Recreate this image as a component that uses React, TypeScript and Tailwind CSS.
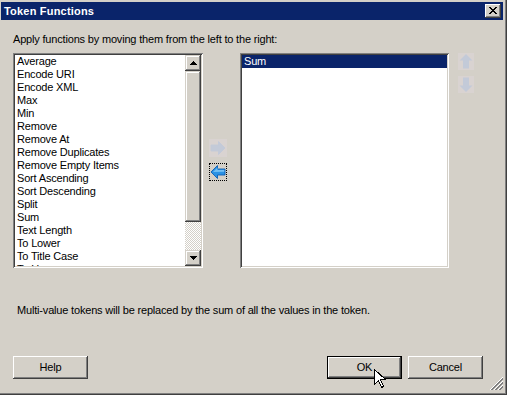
import React from "react";

const items = [
  "Average",
  "Encode URI",
  "Encode XML",
  "Max",
  "Min",
  "Remove",
  "Remove At",
  "Remove Duplicates",
  "Remove Empty Items",
  "Sort Ascending",
  "Sort Descending",
  "Split",
  "Sum",
  "Text Length",
  "To Lower",
  "To Title Case",
  "To Upper",
];

const raisedBtn =
  "shadow-[inset_-1px_-1px_#404040,inset_1px_1px_#ffffff,inset_-2px_-2px_#808080,inset_2px_2px_#d4d0c8]";
const raisedScroll =
  "shadow-[inset_-1px_-1px_#404040,inset_1px_1px_#d4d0c8,inset_-2px_-2px_#808080,inset_2px_2px_#ffffff]";
const sunken =
  "shadow-[inset_1px_1px_#808080,inset_-1px_-1px_#ffffff,inset_2px_2px_#404040,inset_-2px_-2px_#d4d0c8]";

function CloseGlyph() {
  const rows = [
    "XX....XX",
    ".XX..XX.",
    "..XXXX..",
    "...XX...",
    "..XXXX..",
    ".XX..XX.",
    "XX....XX",
  ];
  const rects: React.ReactNode[] = [];
  rows.forEach((r, y) =>
    r.split("").forEach((c, x) => {
      if (c === "X") rects.push(<rect key={`${x}-${y}`} x={x} y={y} width={1} height={1} fill="#000" />);
    })
  );
  return (
    <svg width="8" height="7" viewBox="0 0 8 7" shapeRendering="crispEdges" className="shrink-0">
      {rects}
    </svg>
  );
}

function Tri({ down }: { down?: boolean }) {
  return (
    <svg width="7" height="4" viewBox="0 0 7 4" shapeRendering="crispEdges" className="shrink-0">
      {down ? (
        <>
          <rect x="0" y="0" width="7" height="1" fill="#000" />
          <rect x="1" y="1" width="5" height="1" fill="#000" />
          <rect x="2" y="2" width="3" height="1" fill="#000" />
          <rect x="3" y="3" width="1" height="1" fill="#000" />
        </>
      ) : (
        <>
          <rect x="3" y="0" width="1" height="1" fill="#000" />
          <rect x="2" y="1" width="3" height="1" fill="#000" />
          <rect x="1" y="2" width="5" height="1" fill="#000" />
          <rect x="0" y="3" width="7" height="1" fill="#000" />
        </>
      )}
    </svg>
  );
}

function HArrow({ dir, enabled }: { dir: "left" | "right"; enabled?: boolean }) {
  const d =
    dir === "left"
      ? "M1 8 L7.5 1.5 L7.5 5 L15 5 L15 11 L7.5 11 L7.5 14.5 Z"
      : "M15 8 L8.5 1.5 L8.5 5 L1 5 L1 11 L8.5 11 L8.5 14.5 Z";
  return (
    <svg width="16" height="16" viewBox="0 0 16 16" className="shrink-0">
      <path
        d={d}
        fill={enabled ? "#2a92e4" : "#c3cad8"}
        stroke={enabled ? "#0b5fb4" : "#c3cad8"}
        strokeWidth="0.9"
        strokeLinejoin="round"
      />
      {enabled && <path d="M3 8 L7.5 3.6 L7.5 6 L14.3 6 L14.3 7.8 Z" fill="#86ccf6" opacity="0.8" />}
    </svg>
  );
}

function VArrow({ dir }: { dir: "up" | "down" }) {
  const d =
    dir === "up"
      ? "M8 1 L14.5 7.5 L11 7.5 L11 15.5 L5 15.5 L5 7.5 L1.5 7.5 Z"
      : "M8 16 L14.5 9.5 L11 9.5 L11 1.5 L5 1.5 L5 9.5 L1.5 9.5 Z";
  return (
    <svg width="16" height="17" viewBox="0 0 16 17" className="shrink-0">
      <path d={d} fill="#c3cad8" />
    </svg>
  );
}

function Cursor() {
  return (
    <svg width="13" height="21" viewBox="0 0 13 21" shapeRendering="crispEdges">
      <path
        d="M0.5 0.5 L0.5 15.5 L4.5 11.5 L7.5 18.5 L9.5 17.5 L6.5 10.5 L11.5 10.5 Z"
        fill="#fff"
        stroke="#000"
        strokeWidth="1"
        strokeLinejoin="miter"
      />
    </svg>
  );
}

function Grip() {
  const lines: React.ReactNode[] = [];
  [0, 4, 8].forEach((k) => {
    lines.push(<line key={`w${k}`} x1={13} y1={k} x2={k} y2={13} stroke="#ffffff" strokeWidth="1" />);
    lines.push(<line key={`g1${k}`} x1={13} y1={k + 1} x2={k + 1} y2={13} stroke="#808080" strokeWidth="1" />);
    lines.push(<line key={`g2${k}`} x1={13} y1={k + 2} x2={k + 2} y2={13} stroke="#808080" strokeWidth="1" />);
  });
  return (
    <svg width="13" height="13" viewBox="0 0 13 13" shapeRendering="crispEdges">
      {lines}
    </svg>
  );
}

export default function App() {
  return (
    <div className="w-[507px] h-[395px] bg-[#d4d0c8] border-r border-b border-r-[#404040] border-b-[#404040] font-['Liberation_Sans',Arial,sans-serif] text-[11px] tracking-[-0.18px] text-black select-none overflow-hidden">
      <div className="relative h-full border-r border-b border-r-[#808080] border-b-[#808080] pt-[2px] pl-[1px] pr-[2px] flex flex-col">
        {/* Title bar */}
        <div className="h-[18px] bg-[#0a246a] flex items-center justify-between pl-[3px] pr-[2px]">
          <span className="text-white font-bold text-[11px] leading-[13px] tracking-[0.2px]">Token Functions</span>
          <div className={`w-[16px] h-[14px] bg-[#d4d0c8] flex items-center justify-center pb-[1px] ${raisedBtn}`}>
            <CloseGlyph />
          </div>
        </div>

        {/* Body */}
        <div className="flex flex-col pl-[12px]">
          <div className="mt-[13px] h-[13px] leading-[13px]">Apply functions by moving them from the left to the right:</div>

          <div className="mt-[7px] flex flex-row h-[215px]">
            {/* Left list */}
            <div className={`w-[190px] h-[215px] bg-white p-[2px] flex flex-row ${sunken}`}>
              <div className="flex-1 overflow-hidden">
                {items.map((it) => (
                  <div key={it} className="h-[13px] leading-[13px] pl-[2px] whitespace-nowrap">
                    {it}
                  </div>
                ))}
              </div>
              <div className="w-[16px] flex flex-col">
                <div className={`h-[16px] bg-[#d4d0c8] flex items-center justify-center ${raisedScroll}`}>
                  <Tri />
                </div>
                <div className={`h-[151px] bg-[#d4d0c8] ${raisedScroll}`} />
                <div className="flex-1 [background-image:repeating-conic-gradient(#d4d0c8_0%_25%,#ffffff_0%_50%)] [background-size:2px_2px]" />
                <div className={`h-[16px] bg-[#d4d0c8] flex items-center justify-center ${raisedScroll}`}>
                  <Tri down />
                </div>
              </div>
            </div>

            {/* Move buttons */}
            <div className="ml-[6px] w-[18px] flex flex-col">
              <div className="mt-[86px] w-[18px] h-[18px] bg-[#d9d3d1] flex items-center justify-center">
                <HArrow dir="right" />
              </div>
              <div className="mt-[6px] w-[18px] h-[18px] border border-dotted border-black flex items-center justify-center">
                <HArrow dir="left" enabled />
              </div>
            </div>

            {/* Right list */}
            <div className={`ml-[13px] w-[209px] h-[215px] bg-white p-[2px] ${sunken}`}>
              <div className="h-[13px] leading-[13px] bg-[#0a246a] text-white pl-[2px]">Sum</div>
            </div>

            {/* Up/down */}
            <div className="ml-[9px] w-[16px] flex flex-col">
              <div className="w-[16px] h-[17px] bg-[#d9d3d1] flex items-center justify-center">
                <VArrow dir="up" />
              </div>
              <div className="mt-[6px] w-[16px] h-[17px] bg-[#d9d3d1] flex items-center justify-center">
                <VArrow dir="down" />
              </div>
            </div>
          </div>

          <div className="mt-[36px] ml-[4px] h-[13px] leading-[13px]">
            Multi-value tokens will be replaced by the sum of all the values in the token.
          </div>

          <div className="mt-[39px] flex flex-row">
            <div className={`w-[75px] h-[23px] bg-[#d4d0c8] flex items-center justify-center ${raisedBtn}`}>Help</div>
            <div className="ml-[239px] w-[75px] h-[23px] border border-black bg-[#d4d0c8]">
              <div className={`w-full h-full flex items-center justify-center ${raisedBtn}`}>OK</div>
            </div>
            <div className={`ml-[6px] w-[75px] h-[23px] bg-[#d4d0c8] flex items-center justify-center ${raisedBtn}`}>
              Cancel
            </div>
          </div>
        </div>

        <div className="absolute right-[2px] bottom-[3px]">
          <Grip />
        </div>
        <div className="absolute left-[374px] top-[369px]">
          <Cursor />
        </div>
      </div>
    </div>
  );
}
